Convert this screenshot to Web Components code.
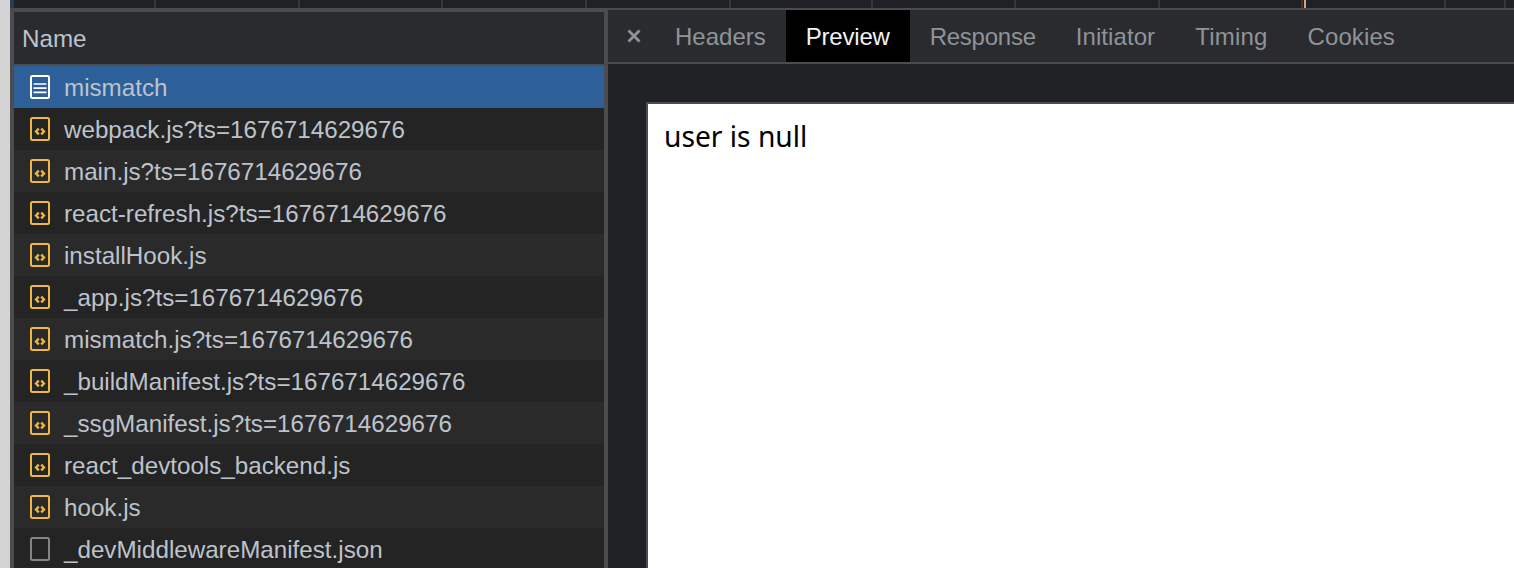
<!DOCTYPE html>
<html>
<head>
<meta charset="utf-8">
<style>
  html, body { margin: 0; height: 100%; overflow: hidden; background: #d4d4d4; }
  body { font-family: "Liberation Sans", Arial, sans-serif; }
</style>
</head>
<body>
<devtools-panel>
  <timeline-strip slot="top"></timeline-strip>
  <request-list slot="left">
    <request-row kind="doc" selected>mismatch</request-row>
    <request-row kind="js">webpack.js?ts=1676714629676</request-row>
    <request-row kind="js" alt>main.js?ts=1676714629676</request-row>
    <request-row kind="js">react-refresh.js?ts=1676714629676</request-row>
    <request-row kind="js" alt>installHook.js</request-row>
    <request-row kind="js">_app.js?ts=1676714629676</request-row>
    <request-row kind="js" alt>mismatch.js?ts=1676714629676</request-row>
    <request-row kind="js">_buildManifest.js?ts=1676714629676</request-row>
    <request-row kind="js" alt>_ssgManifest.js?ts=1676714629676</request-row>
    <request-row kind="js">react_devtools_backend.js</request-row>
    <request-row kind="js" alt>hook.js</request-row>
    <request-row kind="file">_devMiddlewareManifest.json</request-row>
  </request-list>
  <detail-pane slot="right">user is null</detail-pane>
</devtools-panel>

<script>
class DevtoolsPanel extends HTMLElement {
  constructor() {
    super();
    this.attachShadow({ mode: "open" });
    this.shadowRoot.innerHTML = `
      <style>
        :host { display: flex; flex-direction: column; height: 568px; margin-left: 10px; background: #4a4c50; overflow: hidden; }
        .body { flex: 1; display: flex; min-height: 0; padding-left: 4px; gap: 4px; }
        ::slotted([slot=left]) { width: 590px; flex: none; margin-top: 2px; }
        ::slotted([slot=right]) { flex: 1; min-width: 0; }
      </style>
      <slot name="top"></slot>
      <div class="body">
        <slot name="left"></slot>
        <slot name="right"></slot>
      </div>
    `;
  }
}

class TimelineStrip extends HTMLElement {
  constructor() {
    super();
    this.attachShadow({ mode: "open" });
    // ancho de cada celda, la primera lleva el borde azulado de 4px delante
    const cells = [142, 144, 143, 144, 144, 142, 143, 144, 143, 143, 60];
    this.shadowRoot.innerHTML = `
      <style>
        :host { display: flex; height: 8px; margin-bottom: 2px; background: #202124; overflow: hidden; }
        .edge { width: 4px; flex: none; background: #2b3c52; }
        .cell { flex: none; box-sizing: border-box; border-right: 2px solid #36373b; }
        .mark { width: 2px; height: 8px; margin-left: 1px; background: #e8a06a; }
      </style>
      <div class="edge"></div>
      ${cells.map((w, i) => `<div class="cell" style="width:${w}px">${i === 9 ? '<div class="mark"></div>' : ""}</div>`).join("")}
    `;
  }
}

class RequestList extends HTMLElement {
  constructor() {
    super();
    this.attachShadow({ mode: "open" });
    this.shadowRoot.innerHTML = `
      <style>
        :host { display: block; background: #242424; overflow: hidden; }
        .head { height: 54px; box-sizing: border-box; padding: 13px 0 0 8px; background: #2a2b2e; border-bottom: 2px solid #4a4c50; color: #bdc3cc; font-size: 24.2px; line-height: 28px; }
      </style>
      <div class="head">Name</div>
      <slot></slot>
    `;
  }
}

const ICONS = {
  doc: `<rect x="1" y="1" width="18" height="22" rx="1.5" fill="none" stroke="#fff" stroke-width="2"/>
        <path d="M3.5 9h13M3.5 13.2h13M3.5 17.4h13" stroke="#fff" stroke-width="1.7"/>`,
  js: `<rect x="1" y="1" width="18" height="22" rx="1.5" fill="none" stroke="#f0b840" stroke-width="2"/>
       <path d="M8.8 11.6L6 14.5L8.8 17.4M11.2 11.6L14 14.5L11.2 17.4" fill="none" stroke="#f0b840" stroke-width="2.3"/>`,
  file: `<rect x="1" y="1" width="18" height="22" rx="1.5" fill="none" stroke="#80868c" stroke-width="2"/>`,
};

class RequestRow extends HTMLElement {
  constructor() {
    super();
    this.attachShadow({ mode: "open" });
    const kind = this.getAttribute("kind");
    this.shadowRoot.innerHTML = `
      <style>
        :host { display: flex; align-items: center; height: 42px; padding-left: 16px; gap: 14px; background: #242424; color: #bdc3cc; font-size: 24.2px; white-space: nowrap; }
        :host([alt]) { background: #2a2a2a; }
        :host([selected]) { background: #2d6099; }
        svg { width: 20px; height: 24px; flex: none; }
        span { padding-top: 2px; }
      </style>
      <svg viewBox="0 0 20 24">${ICONS[kind]}</svg>
      <span><slot></slot></span>
    `;
  }
}

class DetailPane extends HTMLElement {
  constructor() {
    super();
    this.attachShadow({ mode: "open" });
    // el espaciado va por pestaña para igualar los anchos de la captura
    const tabs = [
      ["Headers", 0],
      ["Preview", -0.2],
      ["Response", -0.25],
      ["Initiator", 0.08],
      ["Timing", 0.2],
      ["Cookies", 0.1],
    ];
    this.shadowRoot.innerHTML = `
      <style>
        :host { display: flex; flex-direction: column; background: #202124; overflow: hidden; }
        .tabs { display: flex; height: 52px; background: #2a2b2e; border-bottom: 2px solid #4a4c50; flex: none; }
        .close { width: 47px; flex: none; display: flex; align-items: center; justify-content: center; box-sizing: border-box; padding: 0 0 1px 5px; }
        .close svg { width: 14px; height: 14px; }
        .tab { padding: 2px 20px 0; line-height: 49px; font-size: 24px; color: #8f9499; }
        .tab.on { background: #000; color: #f2f2f2; }
        .view { flex: 1; padding: 38px 0 0 38px; }
        .doc { height: 100%; background: #fff; border-top: 2px solid #4a4c50; border-left: 2px solid #4a4c50; padding: 13px 16px; box-sizing: border-box; color: #000; font: 28.2px/38px "Noto Sans", "DejaVu Sans", sans-serif; }
      </style>
      <div class="tabs">
        <div class="close"><svg viewBox="0 0 14 14"><path d="M1.5 1.5L12.5 12.5M12.5 1.5L1.5 12.5" stroke="#8f9499" stroke-width="2.8"/></svg></div>
        ${tabs.map(([t, ls]) => `<div class="tab${t === "Preview" ? " on" : ""}" style="letter-spacing:${ls}px">${t}</div>`).join("")}
      </div>
      <div class="view"><div class="doc"><slot></slot></div></div>
    `;
  }
}

customElements.define("devtools-panel", DevtoolsPanel);
customElements.define("timeline-strip", TimelineStrip);
customElements.define("request-list", RequestList);
customElements.define("request-row", RequestRow);
customElements.define("detail-pane", DetailPane);
</script>
</body>
</html>
